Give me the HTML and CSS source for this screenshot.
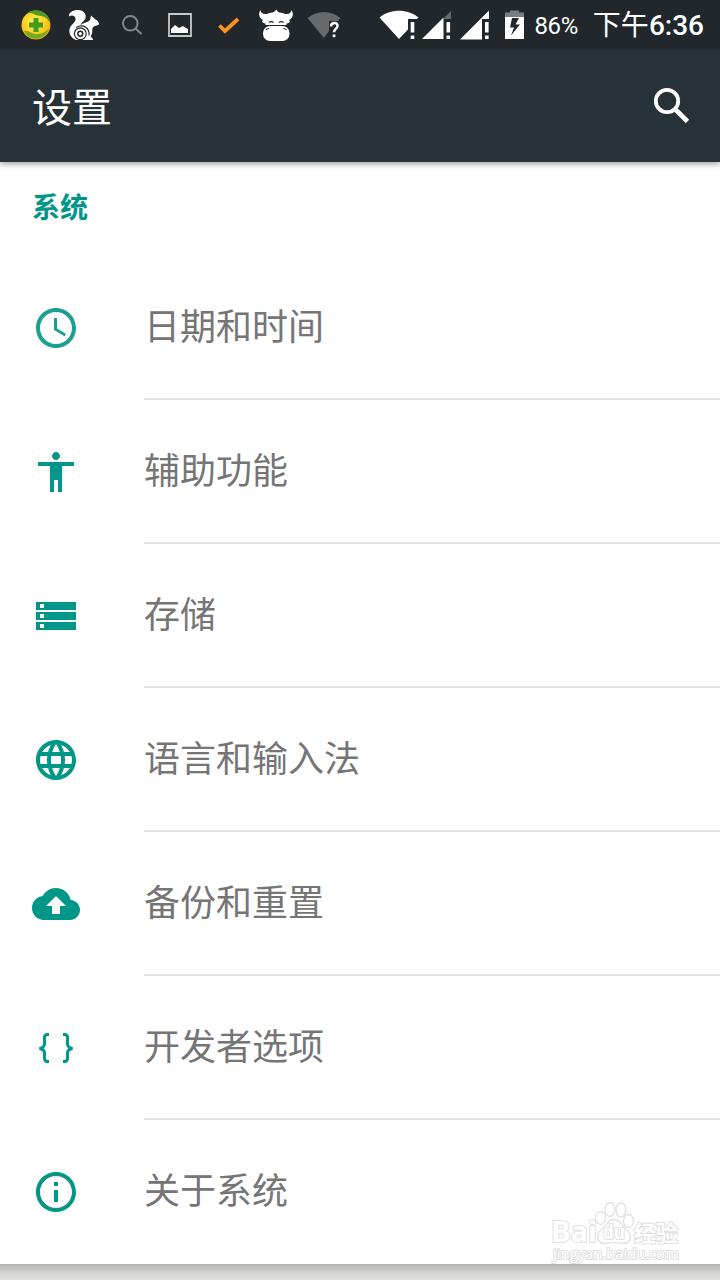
FILE: index.html
```html
<!DOCTYPE html>
<html lang="zh-CN">
<head>
  <title>设置</title>
  <meta charset="utf-8">
  <meta name="viewport" content="width=device-width, initial-scale=1">
  <link rel="stylesheet" href="styles.css">
</head>
<body>
  <div class="screen">
    <header class="header">
      <div class="status">
        <div class="notifications">
          <svg class="notification" viewBox="0 0 48 50">
            <defs>
              <radialGradient id="ball" cx="0.45" cy="0.4" r="0.65">
                <stop offset="0" stop-color="#fff35a"/>
                <stop offset="0.65" stop-color="#fccb1c"/>
                <stop offset="1" stop-color="#f19a12"/>
              </radialGradient>
            </defs>
            <circle cx="24" cy="25" r="14.500" fill="url(#ball)"/>
            <path d="M14 14.500C20 8 33 9 37 19L38 23C34 14 27 17 22 14C18 12.500 16 13 14 14.500Z" fill="#4a9b20"/>
            <path d="M12 31C17 30 20 35 26 34C31 34 34 31 37 29C33 40 18 43 12 31Z" fill="#72ab20"/>
            <path d="M21.500 18h5v4.500h4.500v5h-4.500v4.500h-5v-4.500h-4.500v-5h4.500z" fill="#459c20"/>
          </svg>
          <svg class="notification" viewBox="0 0 48 50" fill="#fff">
            <path d="M9 15C10 11.500 14 10 18 10C23 10 26 13 25.700 17C25.400 20.500 21.500 22 20.500 25C23.500 22.500 28 22.500 30 20L31 15.500L35.500 19.500C37.500 20.500 39 22 39 24.500C36 26 33.500 26 32.500 28C32 30 33 33 30.500 36.500C32 37.500 33 38.500 33 40H16.500C10.500 38.500 8 32 10 27.500C12 24 16 22 15.500 18.500C15 15.500 11.500 14.500 9 16.500Z"/>
            <path d="M16 27.500C23.500 23.500 30 28 29 35.500" fill="none" stroke="#21272a" stroke-width="1.200"/>
            <circle cx="20.300" cy="33.700" r="6.500" fill="#21272a"/>
            <circle cx="20.300" cy="33.700" r="5.300"/>
            <circle cx="20.300" cy="33.700" r="3.200" fill="#21272a"/>
            <circle cx="20.300" cy="33.700" r="1.700"/>
          </svg>
          <svg class="notification" viewBox="0 0 48 50" fill="none" stroke="#85898b" stroke-width="2">
            <circle cx="22.300" cy="23.300" r="7.300"/>
            <path d="M27.500 28.500L33.500 34"/>
          </svg>
          <svg class="notification" viewBox="0 0 48 50">
            <path d="M13 14h22v22h-22z" fill="none" stroke="#c8cac9" stroke-width="1.800"/>
            <path d="M15 33V29L19 25L23 28L27 26L30 28L32 29V33Z" fill="#fff"/>
          </svg>
          <svg class="notification" viewBox="0 0 48 50">
            <path d="M15.500 25.500L21 31L34 19" fill="none" stroke="#fd9220" stroke-width="3.800"/>
          </svg>
          <svg class="notification" viewBox="0 0 48 50" fill="#fff">
            <path d="M8.500 10C9 13.500 12 15 16 13.500L22 12L24.500 9.500L26 12L32 13.500C36 15 39 13.500 39.500 10C42 14 41 18 37 20C39 21 37 23.500 34.500 23.500V25H13.500V23.500C11 23.500 9 21 11 20C7 18 6 14 8.500 10Z"/>
            <rect x="11" y="26" width="26.500" height="15" rx="7"/>
            <g fill="none" stroke="#21272a" stroke-width="1.100">
              <path d="M17 22.500q2.300-1.800 4.600 0M27 22.500q2.300-1.800 4.600 0M14 30q1-1.500 3-1.500M34.500 30q-1-1.500-3-1.500"/>
            </g>
          </svg>
          <svg class="notification" viewBox="0 0 48 50">
            <path d="M7.500 18C17 10 31 10 40.500 18L38 21H29V31L24 38Z" fill="#65696b"/>
            <path d="M31 26.500C31 21.800 38 21.800 37.500 26C37.300 29 34 29 34 32.300" fill="none" stroke="#fff" stroke-width="2.500"/>
            <path d="M32.700 34.500h2.700v2.700h-2.700z" fill="#fff"/>
          </svg>
        </div>
        <div class="system">
          <svg class="wifi" viewBox="0 0 40 50" fill="#fff">
            <path d="M0.500 17.500C11 8.500 29 8.500 39.500 17.500L38 19H29V29.500L20 39Z"/>
            <path d="M31.700 22h3.600v10.500h-3.600zM31.700 35.500h3.600v3.500h-3.600z"/>
          </svg>
          <svg class="signal" viewBox="0 0 30 50" fill="#fff">
            <path d="M29 11V19H22V18Z" fill="#65696b"/>
            <path d="M0 39L21.500 17.500V39ZM24.500 22h3.600v10.500h-3.600zM24.500 35.500h3.600v3.500h-3.600z"/>
          </svg>
          <svg class="signal" viewBox="0 0 30 50" fill="#fff">
            <path d="M0 39.500L29 10.500V19H22V39.500ZM25 22h3.600v10.500h-3.600zM25 35.500h3.600v3.500h-3.600z"/>
          </svg>
          <svg class="battery" viewBox="0 0 19 50">
            <path d="M0 17V12.500H5V10.500H14V12.500H19V17Z" fill="#7b7e80"/>
            <path d="M0 17h19v22h-19z" fill="#fff"/>
            <path d="M7 18L5 27.500H9L6 35.500L15 24.500H10.500L14 18Z" fill="#21272a"/>
          </svg>
          <span class="percent">86%</span>
          <span class="time"><span class="period">下午</span>6:36</span>
        </div>
      </div>
      <div class="toolbar">
        <h1 class="title">设置</h1>
        <svg class="search" viewBox="0 0 48 48" fill="none" stroke="#fff">
          <circle cx="19" cy="19" r="11.200" stroke-width="3.800"/>
          <path d="M28 28L39.500 39.500" stroke-width="4.600"/>
        </svg>
      </div>
    </header>

    <main class="content">
      <h2 class="category">系统</h2>
      <ul class="list">
        <li class="item">
          <svg class="icon icon-light" viewBox="0 0 24 24">
            <path d="M11.990 2C6.470 2 2 6.480 2 12s4.470 10 9.990 10C17.520 22 22 17.520 22 12S17.520 2 11.990 2zM12 20c-4.420 0-8-3.580-8-8s3.580-8 8-8 8 3.580 8 8-3.580 8-8 8zM12.500 7H11v6l5.250 3.150.75-1.230-4.500-2.670z"/>
          </svg>
          <span class="label">日期和时间</span>
        </li>
        <li class="item">
          <svg class="icon" viewBox="0 0 24 24">
            <path d="M12 2c1.100 0 2 .9 2 2s-.9 2-2 2-2-.9-2-2 .9-2 2-2zm9 7h-6v13h-2v-6h-2v6H9V9H3V7h18v2z"/>
          </svg>
          <span class="label">辅助功能</span>
        </li>
        <li class="item">
          <svg class="icon" viewBox="0 0 24 24">
            <path d="M2 19h20v-4H2v4zm2-3h2v2H4v-2zM2 5v4h20V5H2zm4 3H4V6h2v2zm-4 6h20v-4H2v4zm2-3h2v2H4v-2z"/>
          </svg>
          <span class="label">存储</span>
        </li>
        <li class="item">
          <svg class="icon" viewBox="0 0 24 24">
            <path d="M11.990 2C6.470 2 2 6.480 2 12s4.470 10 9.990 10C17.520 22 22 17.520 22 12S17.520 2 11.990 2zm6.930 6h-2.950c-.32-1.250-.78-2.450-1.380-3.560 1.840.63 3.370 1.910 4.330 3.560zM12 4.040c.83 1.200 1.480 2.530 1.910 3.960h-3.820c.43-1.430 1.080-2.760 1.910-3.960zM4.260 14C4.100 13.360 4 12.690 4 12s.1-1.360.26-2h3.380c-.08.66-.14 1.320-.14 2 0 .68.06 1.340.14 2H4.260zm.82 2h2.950c.32 1.250.78 2.450 1.380 3.560-1.840-.63-3.370-1.900-4.330-3.560zm2.950-8H5.080c.96-1.660 2.490-2.930 4.330-3.560C8.810 5.550 8.350 6.750 8.030 8zM12 19.960c-.83-1.200-1.480-2.530-1.910-3.960h3.820c-.43 1.430-1.080 2.760-1.910 3.960zM14.340 14H9.660c-.09-.66-.16-1.320-.16-2 0-.68.07-1.350.16-2h4.680c.09.65.16 1.320.16 2 0 .68-.07 1.340-.16 2zm.25 5.560c.6-1.110 1.060-2.310 1.380-3.560h2.950c-.96 1.650-2.490 2.930-4.330 3.560zM16.360 14c.08-.66.14-1.320.14-2 0-.68-.06-1.340-.14-2h3.380c.16.64.26 1.310.26 2s-.1 1.360-.26 2h-3.380z"/>
          </svg>
          <span class="label">语言和输入法</span>
        </li>
        <li class="item">
          <svg class="icon" viewBox="0 0 24 24">
            <path d="M19.350 10.040C18.670 6.590 15.640 4 12 4 9.110 4 6.600 5.640 5.350 8.040 2.340 8.360 0 10.910 0 14c0 3.310 2.690 6 6 6h13c2.760 0 5-2.240 5-5 0-2.640-2.050-4.780-4.650-4.960zM14 13v4h-4v-4H7l4.650-4.650c.2-.2.510-.2.710 0L17 13h-3z"/>
          </svg>
          <span class="label">备份和重置</span>
        </li>
        <li class="item">
          <svg class="icon" viewBox="0 0 48 48">
            <path class="brace" d="M17 10.500H15.500Q12.500 10.500 12.500 13.500V20Q12.500 23.500 7.500 24.500Q12.500 25.500 12.500 29V34Q12.500 37.500 15.500 37.500H17M31 10.500H32.500Q35.500 10.500 35.500 13.500V20Q35.500 23.500 40.500 24.500Q35.500 25.500 35.500 29V34Q35.500 37.500 32.500 37.500H31"/>
          </svg>
          <span class="label">开发者选项</span>
        </li>
        <li class="item">
          <svg class="icon" viewBox="0 0 24 24">
            <path d="M11 17h2v-6h-2v6zm1-15C6.480 2 2 6.480 2 12s4.480 10 10 10 10-4.480 10-10S17.520 2 12 2zm0 18c-4.410 0-8-3.590-8-8s3.590-8 8-8 8 3.590 8 8-3.590 8-8 8zM11 9h2V7h-2v2z"/>
          </svg>
          <span class="label">关于系统</span>
        </li>
      </ul>
    </main>
    <footer class="footer"></footer>

    <svg class="watermark" viewBox="0 0 140 64">
      <g class="outline">
        <ellipse cx="50.500" cy="17" rx="5" ry="6.500"/>
        <ellipse cx="60" cy="8.500" rx="5" ry="7"/>
        <ellipse cx="71" cy="9" rx="5" ry="7"/>
        <ellipse cx="78.500" cy="20" rx="5" ry="6.500"/>
        <path d="M64 18.500C70 18.500 72 25 76 28C83 34 81 42.500 73 42.500C68 41.500 60 41.500 55 42.500C47 42.500 45 34 52 28C56 25 58 18.500 64 18.500Z"/>
      </g>
      <text class="mark mark-bai" x="1" y="41" textLength="46" lengthAdjust="spacingAndGlyphs">Bai</text>
      <text class="mark mark-du" x="53" y="38" textLength="22" lengthAdjust="spacingAndGlyphs">du</text>
      <text class="mark mark-cn" x="84" y="40" textLength="44">经验</text>
      <text class="mark mark-url" x="3" y="58" textLength="126" lengthAdjust="spacingAndGlyphs">jingyan.baidu.com</text>
    </svg>
  </div>
</body>
</html>
```

FILE: styles.css
```css
*, *::before, *::after {
  box-sizing: border-box;
  margin: 0;
  padding: 0;
}

body {
  font-family: Roboto, "Noto Sans CJK SC", sans-serif;
  background: #ffffff;
}

.screen {
  position: relative;
  display: flex;
  flex-direction: column;
  width: 720px;
  height: 1280px;
  overflow: hidden;
}

svg {
  display: block;
  flex-shrink: 0;
}

.header {
  position: relative;
  color: #ffffff;
  background: #263238;
  box-shadow: 0 2px 6px rgba(0, 0, 0, 0.38);
}

.status {
  display: flex;
  justify-content: space-between;
  height: 50px;
  padding: 0 16px 0 12px;
  background: #21272a;
}

.notifications,
.system {
  display: flex;
  align-items: center;
}

.notification {
  width: 48px;
  height: 50px;
}

.wifi {
  width: 40px;
  height: 50px;
  margin-right: 3px;
}

.signal {
  width: 30px;
  height: 50px;
  margin-right: 8px;
}

.battery {
  width: 19px;
  height: 50px;
  margin-left: 7px;
  margin-right: 11px;
}

.percent {
  margin-right: 15px;
  padding-top: 2px;
  font-size: 24px;
  letter-spacing: -0.4px;
  line-height: 50px;
}

.time {
  padding-top: 2px;
  font-size: 28px;
  font-weight: 500;
  line-height: 48px;
  white-space: nowrap;
}

.period {
  font-weight: 400;
}

.toolbar {
  display: flex;
  align-items: center;
  justify-content: space-between;
  height: 112px;
  padding: 0 24px 0 32px;
}

.title {
  padding-bottom: 2px;
  font-size: 40px;
  font-weight: 400;
}

.search {
  width: 48px;
  height: 48px;
}

.content {
  flex: 1;
}

.category {
  height: 94px;
  padding-left: 32px;
  color: #009688;
  font-size: 28px;
  font-weight: 700;
  line-height: 94px;
}

.list {
  list-style: none;
}

.item {
  display: flex;
  align-items: center;
  gap: 64px;
  height: 144px;
  padding-left: 32px;
}

.icon {
  width: 48px;
  height: 48px;
  fill: #009688;
}

.icon-light {
  opacity: 0.9;
}

.brace {
  fill: none;
  stroke: #009688;
  stroke-width: 3;
}

.label {
  flex: 1;
  height: 144px;
  border-bottom: 2px solid #e2e2e2;
  color: #757575;
  font-size: 36px;
  line-height: 144px;
}

.item:last-child .label {
  border-bottom: 0;
}

.footer {
  height: 16px;
  background: linear-gradient(#b5b5b3, #d6d6d4 60%, #e0e0de);
}

.watermark {
  position: absolute;
  top: 1201px;
  left: 550px;
  width: 140px;
  height: 64px;
}

.outline,
.mark {
  fill: #ffffff;
  stroke: #e0e0e0;
  stroke-width: 1.3;
}

.mark {
  stroke-width: 2;
  paint-order: stroke;
  font-family: "Open Sans", "Noto Sans CJK SC", sans-serif;
  font-weight: 700;
}

.mark-bai {
  font-size: 29px;
}

.mark-du {
  font-size: 19px;
}

.mark-cn {
  font-size: 22px;
}

.mark-url {
  font-size: 15px;
  font-weight: 400;
}
```
